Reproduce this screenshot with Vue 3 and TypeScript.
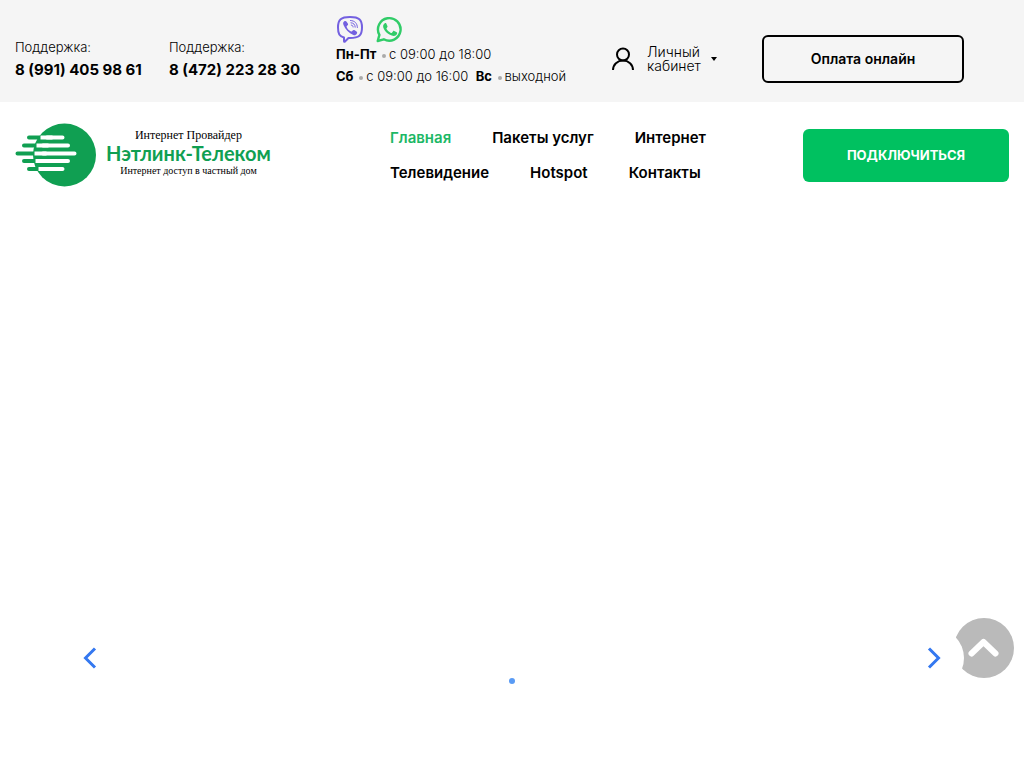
<script setup lang="ts">
interface Phone {
  label: string
  number: string
  href: string
}

const phones: Phone[] = [
  { label: 'Поддержка:', number: '8 (991) 405 98 61', href: 'tel:89914059861' },
  { label: 'Поддержка:', number: '8 (472) 223 28 30', href: 'tel:84722232830' },
]

const links: string[] = ['Главная', 'Пакеты услуг', 'Интернет', 'Телевидение', 'Hotspot', 'Контакты']

function toTop(): void {
  window.scrollTo({ top: 0, behavior: 'smooth' })
}
</script>

<template>
  <div class="page">
    <div class="topbar">
      <div v-for="phone in phones" :key="phone.number" class="phone">
        <span class="phone-label">{{ phone.label }}</span>
        <a class="phone-number" :href="phone.href">{{ phone.number }}</a>
      </div>

      <div class="hours">
        <div class="messengers">
          <a href="#viber" aria-label="Viber">
            <svg width="28" height="28" viewBox="0 0 28 28" fill="none" stroke="#7360e0" stroke-linecap="round" stroke-linejoin="round">
              <path stroke-width="2" d="M8 22.5C3.500 21.500 2 19 2 12.500C2 4.500 5 2 14 2s12 2.500 12 10.500S23 23 14 23h-1.500L9 26.500c-.6.600-1 .300-1-.5z" />
              <path fill="#7360e0" stroke="none" d="M8.300 6.300c1-.7 1.700-.4 2.300.4l1.200 1.800c.5.900.3 1.500-.5 2.100-.8.600-.8 1-.4 1.900.8 1.800 2 3 3.700 3.700.9.400 1.300.300 1.900-.5.600-.8 1.300-1 2.200-.4l1.800 1.300c.8.600.9 1.300.3 2.100-1 1.400-2 1.900-3.400 1.200-4.600-2-7.900-5.500-9.900-10-.7-1.600-.4-2.700.8-3.600z" />
              <path stroke-width="1" d="M14.500 5.500c4.300.2 6.700 2.700 6.900 7M15 7.800c2.700.2 4.100 1.700 4.200 4.400M15.300 10.100c1.200.1 1.700.7 1.800 1.900" />
            </svg>
          </a>
          <a href="#whatsapp" aria-label="WhatsApp">
            <svg width="28" height="28" viewBox="0 0 28 28" fill="none" stroke="#31cc68" stroke-linejoin="round">
              <path stroke-width="2.400" d="M2.700 26l1.700-6.100A11.300 11.300 0 1 1 8.800 24.300z" />
              <path fill="#31cc68" stroke="none" d="M9.600 8.400c.5-.4 1.400-.4 1.700.2l1.200 2.700c.2.500-.1 1-.9 1.900-.3.300-.2.600 0 .9 1.100 1.800 2.400 3 4.300 3.800.4.200.7.100 1-.2l1.200-1.500c.3-.4.700-.4 1.100-.2l2.500 1.200c.5.200.6.500.5 1-.2 1.700-1.900 2.800-3.600 2.700-4.900-.4-10.500-5.800-10.500-9.700 0-1.100.6-2.100 1.500-2.800z" />
            </svg>
          </a>
        </div>
        <p class="hours-line"><b>Пн-Пт</b> <i class="bullet"></i>с 09:00 до 18:00</p>
        <p class="hours-line"><b>Сб</b> <i class="bullet"></i>с 09:00 до 16:00&nbsp; <b>Вс</b> <i class="bullet"></i>выходной</p>
      </div>

      <button class="account" type="button">
        <svg width="24" height="24" viewBox="0 0 24 24" fill="none" stroke="#000" stroke-width="2">
          <circle cx="12" cy="7.500" r="6" />
          <path d="M2 23c0-5.500 4.500-9.500 10-9.500S22 17.500 22 23" />
        </svg>
        <span class="account-text">Личный кабинет</span>
        <i class="caret"></i>
      </button>

      <button class="pay" type="button">Оплата онлайн</button>
    </div>

    <header class="header">
      <a class="logo" href="#home">
        <svg width="82" height="64" viewBox="0 0 82 64" fill="none" stroke-linecap="round" stroke-width="4">
          <circle cx="49.500" cy="32" r="31.500" fill="#109f52" />
          <path stroke="#109f52" d="M14 14.500h12M9 22.500h14M2.500 30.500h17M9 38h14M14 46h12" />
          <path stroke="#fff" stroke-linecap="butt" d="M25.500 14.500h12M21.500 22.500h12M19.500 30.500h12M20.500 38h12M23.500 46h12" />
          <path stroke="#fff" d="M32 14.500h15.500M28 22.500h25M28 30.500h31.500M28 38h25M32 46h15.500" />
        </svg>
        <span class="logo-text">
          <span class="logo-top">Интернет Провайдер</span>
          <span class="logo-name">Нэтлинк-Телеком</span>
          <span class="logo-bottom">Интернет доступ в частный дом</span>
        </span>
      </a>

      <nav class="nav">
        <a v-for="(link, i) in links" :key="link" href="#" :class="{ active: i === 0 }">{{ link }}</a>
      </nav>

      <button class="connect" type="button">подключиться</button>
    </header>

    <section class="slider" aria-label="Слайдер">
      <button class="arrow" type="button" aria-label="Назад">
        <svg width="14" height="22" viewBox="0 0 14 22" fill="none" stroke="#3478f0" stroke-width="3">
          <path d="M12 1.500L2.500 11l9.500 9.500" />
        </svg>
      </button>
      <button class="dot" type="button" aria-label="Слайд 1"></button>
      <button class="arrow" type="button" aria-label="Вперёд">
        <svg width="14" height="22" viewBox="0 0 14 22" fill="none" stroke="#3478f0" stroke-width="3">
          <path d="M2 1.500L11.500 11L2 20.500" />
        </svg>
      </button>
    </section>

    <button class="to-top" type="button" aria-label="Наверх" @click="toTop">
      <svg width="60" height="60" viewBox="0 0 60 60" fill="none" stroke="#fff" stroke-width="6" stroke-linecap="round" stroke-linejoin="round">
        <path d="M17.500 35.500L29.500 24l12 11.500" />
      </svg>
    </button>
  </div>
</template>

<style>
body {
  margin: 0;
  background: #fff;
}
</style>

<style scoped>
.page {
  display: flex;
  flex-direction: column;
  min-height: 100vh;
  font-family: Inter, "Liberation Sans", sans-serif;
  color: #000;
}

a {
  color: inherit;
  text-decoration: none;
}

button {
  padding: 0;
  border: 0;
  background: none;
  font-family: inherit;
  color: inherit;
  cursor: pointer;
}

svg {
  display: block;
  flex: none;
}

.topbar {
  display: grid;
  grid-template-columns: 154fr 167fr 275fr 151fr 247fr;
  padding: 15px;
  background: #f5f5f5;
}

.phone {
  display: flex;
  flex-direction: column;
  padding-top: 21px;
  white-space: nowrap;
}

.phone-label {
  font-size: 13px;
  line-height: 22px;
  font-weight: 300;
}

.phone-number {
  font-size: 15px;
  line-height: 24px;
  font-weight: 700;
}

.messengers {
  display: flex;
  gap: 11px;
  height: 28px;
}

.hours-line {
  margin: 0;
  font-size: 13px;
  line-height: 22px;
  font-weight: 300;
  white-space: nowrap;
}

.hours-line b {
  font-weight: 700;
}

.bullet {
  display: inline-block;
  width: 4px;
  height: 4px;
  margin: 0 3px 0 2px;
  border-radius: 50%;
  background: #aaa;
  vertical-align: 1px;
}

.account {
  display: flex;
  align-items: center;
  align-self: center;
  height: 48px;
  margin-top: 15px;
  text-align: left;
}

.account-text {
  width: 56px;
  margin: 0 8px 0 12px;
  font-size: 14px;
  line-height: 14px;
  font-weight: 300;
}

.caret {
  border: 3px solid transparent;
  border-top: 4px solid #000;
  border-bottom: 0;
}

.pay {
  width: 202px;
  height: 48px;
  margin-top: 20px;
  padding-bottom: 2px;
  border: 2px solid #000;
  border-radius: 6px;
  font-size: 14px;
  font-weight: 600;
}

.header {
  display: grid;
  grid-template-columns: 375fr 413fr 206fr;
  align-items: center;
  padding: 21px 15px;
}

.logo {
  display: flex;
  align-items: center;
  gap: 9px;
}

.logo-text {
  display: flex;
  flex-direction: column;
  align-items: center;
  padding-bottom: 4px;
  white-space: nowrap;
}

.logo-top {
  font-family: "Liberation Serif", serif;
  font-size: 12px;
  line-height: 14px;
}

.logo-name {
  font-family: Lato, sans-serif;
  font-size: 20px;
  line-height: 22px;
  font-weight: 700;
  color: #109f52;
}

.logo-bottom {
  font-family: "Liberation Serif", serif;
  font-size: 10px;
  line-height: 14px;
}

.nav {
  display: flex;
  flex-wrap: wrap;
  gap: 15px 41px;
  font-size: 15px;
  line-height: 20px;
  font-weight: 600;
}

.active {
  color: #1cb866;
}

.connect {
  height: 53px;
  border-radius: 6px;
  background: #00c160;
  color: #fff;
  font-size: 13px;
  font-weight: 700;
  text-transform: uppercase;
}

.slider {
  display: flex;
  flex: 1;
  align-items: flex-end;
  justify-content: space-between;
  padding: 0 60px 80px;
}

.arrow {
  display: grid;
  place-items: center;
  position: relative;
  z-index: 2;
  width: 60px;
  height: 60px;
  border-radius: 50%;
  background: #fff;
}

.dot {
  width: 6px;
  height: 6px;
  margin-bottom: 4px;
  border-radius: 50%;
  background: #599bf5;
}

.to-top {
  position: fixed;
  right: 10px;
  bottom: 90px;
  z-index: 1;
  width: 60px;
  height: 60px;
  border-radius: 50%;
  background: #bababa;
}
</style>
